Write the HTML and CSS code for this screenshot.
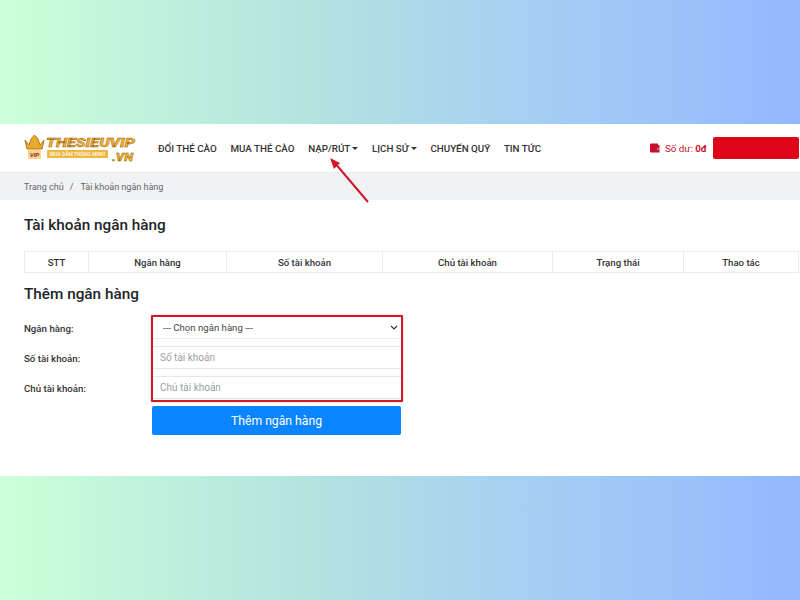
FILE: index.html
```html
<!DOCTYPE html>
<html lang="vi">
<head>
	<meta charset="utf-8">
	<title>Tài khoản ngân hàng</title>
	<link rel="stylesheet" href="styles.css">
</head>
<body>
	<div class="panel">
		<!-- header -->
		<header class="topbar">
			<svg class="logo" width="112" height="30" viewBox="0 0 112 30">
				<path d="M1 7 L5 12 L7 6 L10.500 2 L14 6 L16 12 L20 7 L18 16 H3 Z" fill="#e9a92c" stroke="#b9761a" stroke-width="1"/>
				<rect x="4" y="17" width="13" height="9" rx="1" fill="#f6d88e"/>
				<text x="10.500" y="24" class="logo-vip">VIP</text>
				<text x="22" y="14" textLength="89" lengthAdjust="spacingAndGlyphs" class="logo-name">THESIEUVIP</text>
				<rect x="23" y="17" width="61" height="8" rx="1" fill="#eeb548"/>
				<text x="53.500" y="23" class="logo-slogan">MUA SẮM THÔNG MINH</text>
				<text x="88" y="27.500" textLength="21" lengthAdjust="spacingAndGlyphs" class="logo-vn">.VN</text>
			</svg>
			<nav class="menu">
				<a>ĐỔI THẺ CÀO</a>
				<a>MUA THẺ CÀO</a>
				<a class="drop">NẠP/RÚT</a>
				<a class="drop">LỊCH SỬ</a>
				<a>CHUYỂN QUỸ</a>
				<a>TIN TỨC</a>
			</nav>
			<div class="balance">
				<svg width="10" height="10" viewBox="0 0 10 10"><path d="M1 0.5 H8 V2 H9.500 V9.500 H1 Q0 9.500 0 8.500 V1.500 Q0 0.500 1 0.500 Z" fill="#c8102e"/><circle cx="8" cy="6" r="0.7" fill="#fff"/></svg>
				<span>Số dư: <b>0đ</b></span>
			</div>
			<div class="redact"></div>
		</header>

		<div class="crumbs"><span>Trang chủ</span><span class="sep">/</span><span>Tài khoản ngân hàng</span></div>

		<main class="content">
			<h2 class="title-one">Tài khoản ngân hàng</h2>
			<table class="accounts">
				<tr>
					<th class="c1">STT</th>
					<th class="c2">Ngân hàng</th>
					<th class="c3">Số tài khoản</th>
					<th class="c4">Chủ tài khoản</th>
					<th class="c5">Trạng thái</th>
					<th>Thao tác</th>
				</tr>
			</table>
			<h2 class="title-two">Thêm ngân hàng</h2>
			<form class="bank-form">
				<label>Ngân hàng:</label>
				<div class="fake-select">--- Chọn ngân hàng ---
					<svg width="8" height="5" viewBox="0 0 8 5"><path d="M1 1 L4 4 L7 1" fill="none" stroke="#333" stroke-width="1.200"/></svg>
				</div>
				<label>Số tài khoản:</label>
				<input type="text" placeholder="Số tài khoản">
				<label>Chủ tài khoản:</label>
				<input type="text" placeholder="Chủ tài khoản">
				<span></span>
				<button type="button">Thêm ngân hàng</button>
			</form>
		</main>

		<!-- annotations on top of the screenshot -->
		<div class="red-box"></div>
		<svg class="arrow" width="44" height="52" viewBox="0 0 44 52">
			<path d="M42 47 L8 7" stroke="#d0182a" stroke-width="2" fill="none"/>
			<path d="M4 3 L14 8 L8 14 Z" fill="#d0182a"/>
		</svg>
	</div>
</body>
</html>
```

FILE: styles.css
```css
body {
	margin: 0;
	height: 600px;
	overflow: hidden;
	padding-top: 124px;
	box-sizing: border-box;
	background: linear-gradient(90deg, #ccffd9 0%, #b3e2e0 40%, #a6d0f2 65%, #92b8ff 100%);
	font-family: Roboto, "Liberation Sans", sans-serif;
	color: #212529;
}
.panel {
	position: relative;
	height: 352px;
	background: #fff;
}
.topbar {
	display: flex;
	align-items: center;
	height: 48px;
	padding-left: 24px;
	border-bottom: 1px solid #e9eaec;
}
.logo {
	flex: none;
	margin-right: 22px;
}
.logo-vip {
	font: italic 700 6px "Liberation Sans", sans-serif;
	fill: #a8201a;
	text-anchor: middle;
}
.logo-name {
	font: italic 900 13px Roboto, sans-serif;
	fill: #f2b42f;
	stroke: #8f5510;
	stroke-width: 0.4px;
}
.logo-slogan {
	font: 700 5px Roboto, sans-serif;
	fill: #fff3d0;
	text-anchor: middle;
}
.logo-vn {
	font: italic 900 11px Roboto, sans-serif;
	fill: #f2b42f;
	stroke: #8f5510;
	stroke-width: 0.4px;
}
.menu {
	display: flex;
	gap: 13.7px;
	font-size: 9.8px;
	font-weight: 500;
	color: #333;
}
.drop::after {
	content: "";
	display: inline-block;
	margin-left: 2px;
	vertical-align: 2px;
	border-left: 3.5px solid transparent;
	border-right: 3.5px solid transparent;
	border-top: 3.5px solid #333;
}
.balance {
	display: flex;
	align-items: center;
	gap: 5px;
	margin-left: auto;
	font-size: 9.8px;
	color: #c8102e;
}
.redact {
	width: 86px;
	height: 22px;
	margin: 0 1px 0 6px;
	border-radius: 2px;
	background: #df0518;
}
.crumbs {
	display: flex;
	align-items: center;
	height: 27px;
	padding-left: 24px;
	background: #f1f2f4;
	font-size: 9px;
	color: #5f666d;
}
.sep {
	margin: 0 7px 0 6px;
}
.content {
	padding: 0 1px 0 24px;
}
h2 {
	margin: 0;
	font-size: 15.3px;
	font-weight: 500;
	line-height: 20px;
	color: #212529;
}
.title-one {
	padding-top: 15px;
}
.title-two {
	padding-top: 11px;
}
.accounts {
	width: 100%;
	margin-top: 16px;
	border-collapse: collapse;
	table-layout: fixed;
}
.accounts th {
	height: 20px;
	padding: 0;
	border: 1px solid #e9ecef;
	font-size: 9.6px;
	font-weight: 500;
	color: #333;
}
.c1 { width: 63px; }
.c2 { width: 137px; }
.c3 { width: 155px; }
.c4 { width: 169px; }
.c5 { width: 130px; }
.bank-form {
	display: grid;
	grid-template-columns: 128px 249px;
	grid-auto-rows: 22px;
	row-gap: 8px;
	align-items: center;
	margin-top: 13px;
	font-size: 9.7px;
}
.bank-form label {
	font-weight: 500;
	color: #333;
}
.fake-select {
	display: flex;
	align-items: center;
	justify-content: space-between;
	height: 22px;
	padding: 0 3px 0 11px;
	box-sizing: border-box;
	border-bottom: 1px solid #e9ecef;
	font-size: 9.6px;
	color: #444;
}
.bank-form input {
	align-self: end;
	height: 23px;
	padding: 0 8px;
	box-sizing: border-box;
	border: 1px solid #e3e6ea;
	border-width: 1px 0;
	font: 10px Roboto, sans-serif;
}
.bank-form input::placeholder {
	color: #9aa1a8;
}
.bank-form button {
	align-self: start;
	height: 29px;
	margin-top: -1px;
	border: 0;
	border-radius: 2px;
	background: #0a84ff;
	color: #fff;
	font: 12.2px Roboto, sans-serif;
}
.red-box {
	position: absolute;
	left: 151px;
	top: 191px;
	width: 248px;
	height: 83px;
	border: 2px solid #d0182a;
	border-radius: 1px;
	box-shadow: 0 0 1px #d0182a;
}
.arrow {
	position: absolute;
	left: 326px;
	top: 31px;
}
```
